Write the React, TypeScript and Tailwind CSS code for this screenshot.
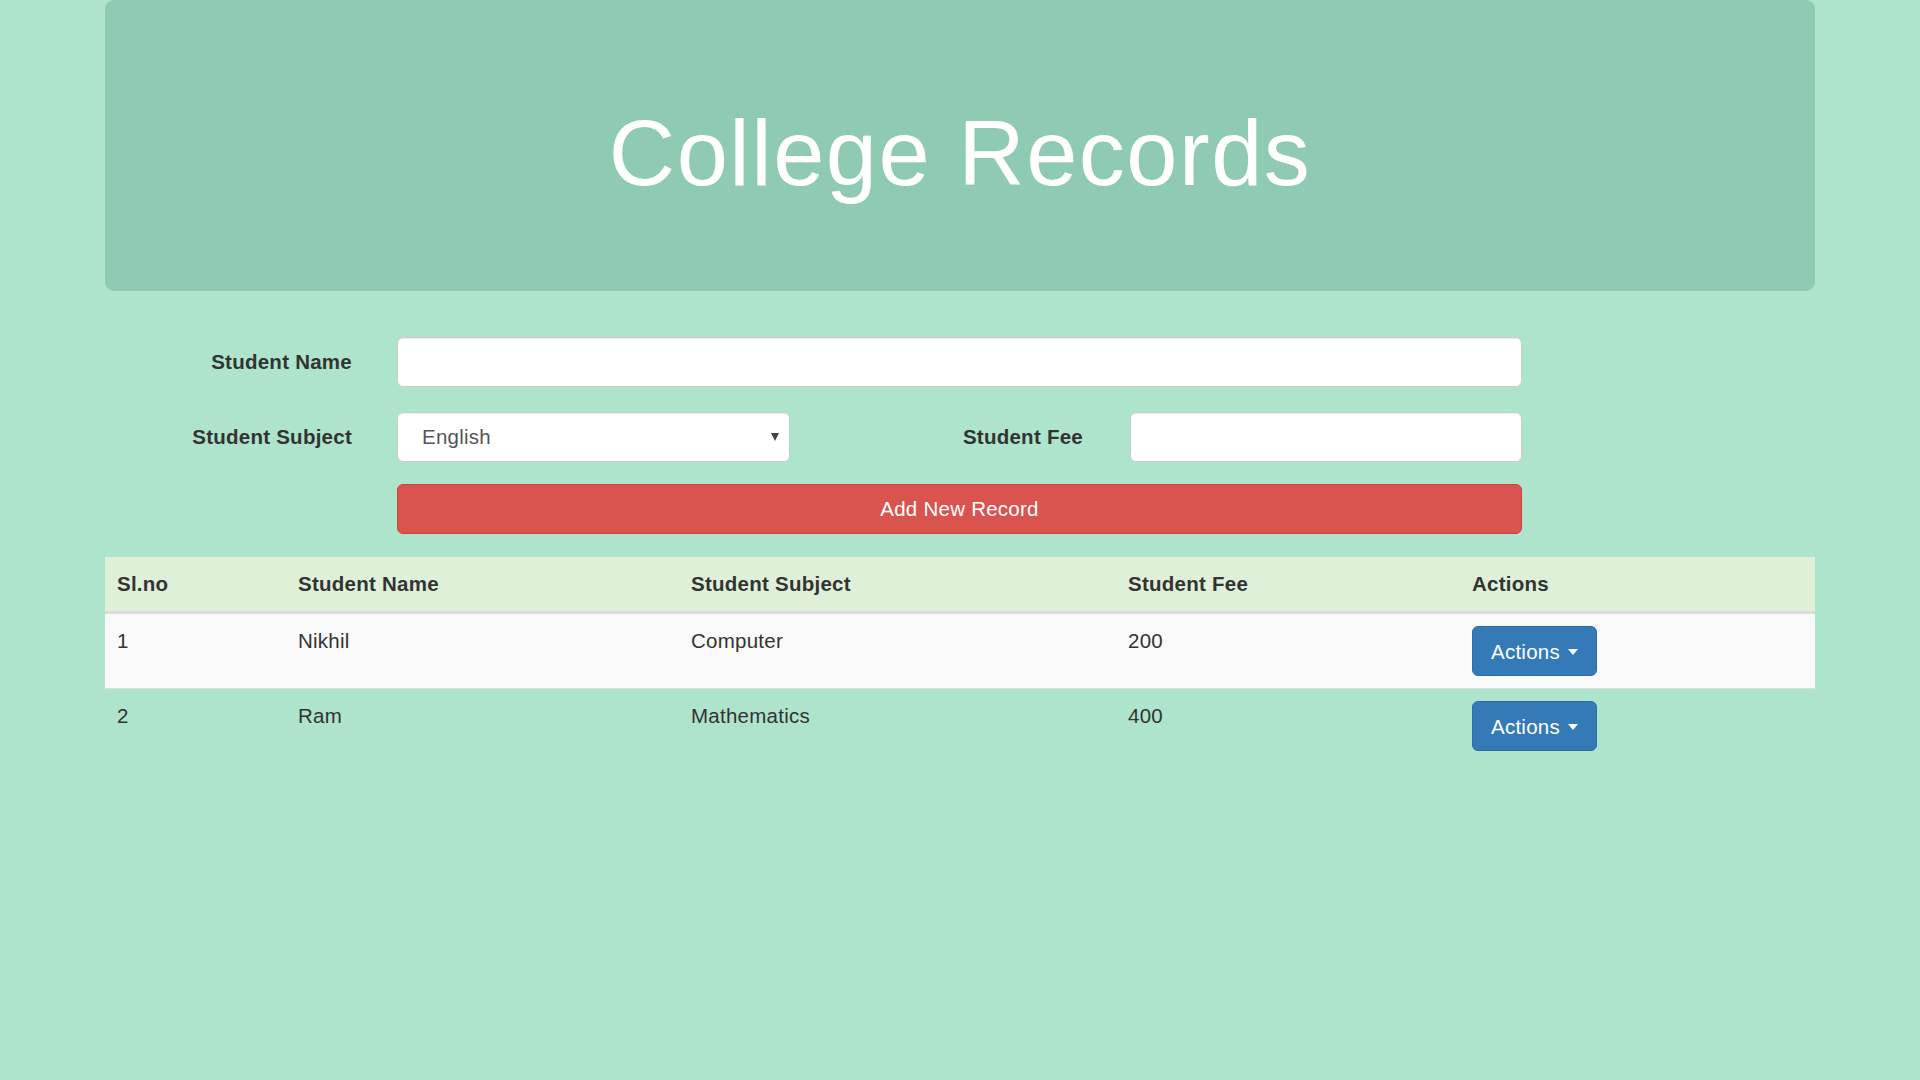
import React from "react";

const rows = [
  { id: 1, name: "Nikhil", subject: "Computer", fee: "200", striped: true },
  { id: 2, name: "Ram", subject: "Mathematics", fee: "400", striped: false },
];

function ActionsButton() {
  return (
    <button
      type="button"
      className="flex h-[50px] w-[125px] items-center justify-center gap-[8px] rounded-[6px] border border-[#2e6da4] bg-[#337ab7] text-[20.5px] tracking-[0.25px] text-white"
    >
      <span>Actions</span>
      <span className="mt-[2px] h-0 w-0 border-l-[5px] border-r-[5px] border-t-[6px] border-l-transparent border-r-transparent border-t-white" />
    </button>
  );
}

export default function App() {
  return (
    <div className="min-h-screen w-full bg-[#aee4cc] font-['Liberation_Sans',Arial,sans-serif] text-[20.5px] leading-[29.2px] tracking-[0.25px] text-[#333]">
      <div className="mx-auto w-[1710px]">
        <header className="h-[291px] rounded-[9px] bg-[#8fcbb2] pt-[103px] text-center">
          <h1 className="text-[92px] font-normal leading-[1.1] tracking-[1.5px] text-white">College Records</h1>
        </header>

        <form className="mt-[46px]" onSubmit={(e) => e.preventDefault()}>
          <div className="flex h-[50px] items-center">
            <label className="w-[247px] text-right font-bold">Student Name</label>
            <input
              type="text"
              className="ml-[45px] h-[50px] w-[1125px] rounded-[6px] border border-[#ccc] bg-white px-[17px] shadow-[inset_0_1px_1px_rgba(0,0,0,0.075)] outline-none"
            />
          </div>

          <div className="mt-[25px] flex h-[50px] items-center">
            <label className="w-[247px] text-right font-bold">Student Subject</label>
            <div className="relative ml-[45px] h-[50px] w-[393px]">
              <select
                defaultValue="English"
                className="h-full w-full appearance-none rounded-[6px] border border-[#ccc] bg-white pl-[24px] text-[20.5px] tracking-[0.25px] text-[#555] shadow-[inset_0_1px_1px_rgba(0,0,0,0.075)] outline-none"
              >
                <option>English</option>
                <option>Computer</option>
                <option>Mathematics</option>
              </select>
              <span className="pointer-events-none absolute right-[11px] top-[21px] h-0 w-0 border-l-[4.5px] border-r-[4.5px] border-t-[8px] border-l-transparent border-r-transparent border-t-[#444]" />
            </div>
            <label className="w-[293px] text-right font-bold">Student Fee</label>
            <input
              type="text"
              className="ml-[47px] h-[50px] w-[392px] rounded-[6px] border border-[#ccc] bg-white px-[17px] shadow-[inset_0_1px_1px_rgba(0,0,0,0.075)] outline-none"
            />
          </div>

          <button
            type="submit"
            className="ml-[292px] mt-[22px] block h-[50px] w-[1125px] rounded-[6px] border border-[#d43f3a] bg-[#d9534f] text-[20.5px] tracking-[0.25px] text-white"
          >
            Add New Record
          </button>
        </form>

        <table className="mt-[23px] w-[1710px] table-fixed border-collapse">
          <colgroup>
            <col className="w-[181px]" />
            <col className="w-[393px]" />
            <col className="w-[437px]" />
            <col className="w-[345px]" />
            <col className="w-[354px]" />
          </colgroup>
          <thead>
            <tr className="bg-[#dff0d8]">
              <th className="border-b-[3px] border-[#ddd] px-[12px] pb-[13px] pt-[12px] text-left font-bold">Sl.no</th>
              <th className="border-b-[3px] border-[#ddd] px-[12px] pb-[13px] pt-[12px] text-left font-bold">Student Name</th>
              <th className="border-b-[3px] border-[#ddd] px-[12px] pb-[13px] pt-[12px] text-left font-bold">Student Subject</th>
              <th className="border-b-[3px] border-[#ddd] px-[12px] pb-[13px] pt-[12px] text-left font-bold">Student Fee</th>
              <th className="border-b-[3px] border-[#ddd] px-[11px] pb-[13px] pt-[12px] text-left font-bold">Actions</th>
            </tr>
          </thead>
          <tbody>
            {rows.map((r, i) => {
              const pt = i === 0 ? "pt-[11.5px]" : "pt-[12px]";
              const border = i === 0 ? "" : "border-t border-[#ddd]";
              return (
                <tr key={r.id} className={r.striped ? "bg-[#f9f9f9]" : ""}>
                  <td className={`${border} ${pt} px-[12px] align-top`}>{r.id}</td>
                  <td className={`${border} ${pt} px-[12px] align-top`}>{r.name}</td>
                  <td className={`${border} ${pt} px-[12px] align-top`}>{r.subject}</td>
                  <td className={`${border} ${pt} px-[12px] align-top`}>{r.fee}</td>
                  <td className={`${border} px-[11px] pb-[12px] pt-[12px] align-top`}>
                    <ActionsButton />
                  </td>
                </tr>
              );
            })}
          </tbody>
        </table>
      </div>
    </div>
  );
}
